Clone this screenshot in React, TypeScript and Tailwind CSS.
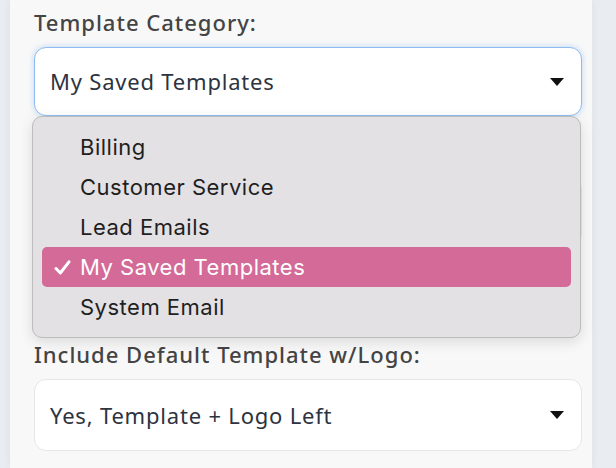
const options = ["Billing", "Customer Service", "Lead Emails", "My Saved Templates", "System Email"];

function Caret() {
  return (
    <svg width="14" height="8" viewBox="0 0 14 8" className="shrink-0" aria-hidden>
      <path d="M0 0h14L7 8z" fill="#111" />
    </svg>
  );
}

function Tick() {
  return (
    <svg width="17" height="15" viewBox="0 0 17 15" aria-hidden>
      <path d="M2 8.5 6.3 13 15 1.8" fill="none" stroke="currentColor" strokeWidth="3" strokeLinecap="round" strokeLinejoin="round" />
    </svg>
  );
}

export default function App() {
  const selected = "My Saved Templates";

  return (
    <div className="flex h-[468px] w-[616px] overflow-hidden bg-[#e9edf2] font-['Noto_Sans',sans-serif]">
      <div className="w-[10px] shrink-0" />
      <div className="relative flex w-[582px] shrink-0 flex-col bg-[#f8f8f8] pl-6 pr-[10px] shadow-[0_0_8px_rgba(0,0,0,0.06)]">
        <label className="mt-[6px] shrink-0 text-[22px] font-medium leading-[32px] tracking-[1px] text-[#444]">
          Template Category:
        </label>
        <div className="mt-[9px] flex h-[69px] shrink-0 items-center justify-between rounded-[12px] border border-[#8fbcf0] bg-white pl-[15px] pr-[17px] text-[22px] tracking-[0.8px] text-[#2d3340] shadow-[0_0_6px_rgba(120,170,235,0.45)]">
          <span>{selected}</span>
          <Caret />
        </div>

        {/* template picker, covered by the open menu */}
        <div className="mt-[62px] flex h-[68px] shrink-0 items-center justify-end rounded-[12px] border border-[#e3e3e3] bg-white pr-[17px]">
          <Caret />
        </div>

        <label className="mt-[92px] shrink-0 text-[22px] font-medium leading-[32px] tracking-[1px] text-[#444]">
          Include Default Template w/Logo:
        </label>
        <div className="mt-[9px] flex h-[72px] shrink-0 items-center justify-between rounded-[12px] border border-[#e6e6e6] bg-white pl-[15px] pr-[17px] text-[22px] tracking-[0.8px] text-[#2d3340]">
          <span>Yes, Template + Logo Left</span>
          <Caret />
        </div>

        <div className="absolute left-[22px] top-[116px] w-[549px] rounded-[10px] border border-[#bcbcbc] bg-[#e3e1e4] px-[9px] py-[10px] font-['Inter','Noto_Sans',sans-serif] shadow-[0_4px_14px_rgba(0,0,0,0.12)]">
          {options.map((opt) => {
            const active = opt === selected;
            return (
              <div
                key={opt}
                className={[
                  "flex h-[40px] items-center rounded-[5px] text-[22px] tracking-[0.5px]",
                  active ? "bg-[#d36a98] text-white" : "text-[#1f1f1f]",
                ].join(" ")}
              >
                <span className="flex w-[38px] justify-center pl-[2px]">{active ? <Tick /> : null}</span>
                <span>{opt}</span>
              </div>
            );
          })}
        </div>
      </div>
      <div className="flex-1" />
    </div>
  );
}
